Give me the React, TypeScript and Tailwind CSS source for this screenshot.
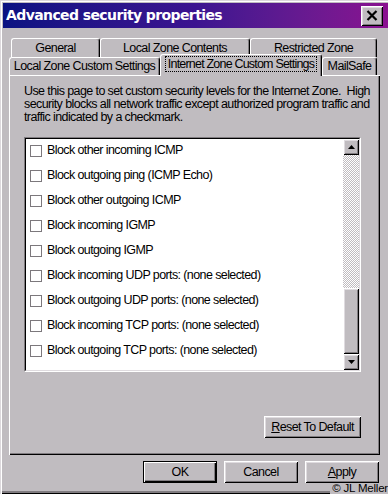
import React from "react";

const ITEMS = [
  "Block other incoming ICMP",
  "Block outgoing ping (ICMP Echo)",
  "Block other outgoing ICMP",
  "Block incoming IGMP",
  "Block outgoing IGMP",
  "Block incoming UDP ports: (none selected)",
  "Block outgoing UDP ports: (none selected)",
  "Block incoming TCP ports: (none selected)",
  "Block outgoing TCP ports: (none selected)",
];

const raised =
  "bg-[#c0bcc0] shadow-[inset_1px_1px_0_#ffffff,inset_-1px_-1px_0_#000000,inset_2px_2px_0_#dfdbdf,inset_-2px_-2px_0_#807c80]";

const Tab = ({ label, w }: { label: string; w: string }) => (
  <div
    className={`${w} h-full flex items-center justify-center whitespace-nowrap rounded-t-[3px] border-t border-l border-t-white border-l-white border-r border-r-black shadow-[inset_-1px_0_0_#807c80] leading-none`}
  >
    {label}
  </div>
);

const Button = ({
  children,
  w = "w-[74px]",
  primary = false,
}: {
  children: React.ReactNode;
  w?: string;
  primary?: boolean;
}) => (
  <div
    className={`${w} h-[22px] flex items-center justify-center whitespace-nowrap ${
      primary
        ? "bg-[#c0bcc0] border border-black shadow-[inset_1px_1px_0_#ffffff,inset_-1px_-1px_0_#000000,inset_-2px_-2px_0_#807c80]"
        : raised
    }`}
  >
    {children}
  </div>
);

const Arrow = ({ down = false }: { down?: boolean }) => (
  <div className={`w-[16px] h-[16px] flex items-center justify-center ${raised}`}>
    <svg width="7" height="4" viewBox="0 0 7 4">
      <polygon points={down ? "0,0 7,0 3.5,4" : "3.5,0 7,4 0,4"} fill="#000" />
    </svg>
  </div>
);

export default function App() {
  return (
    <div className="relative w-[388px] h-[494px] overflow-hidden bg-[#c0bcc0] pl-[3px] pt-[3px] text-black text-[12.5px] tracking-[-0.6px] font-['Liberation_Sans',Arial,sans-serif] shadow-[inset_1px_1px_0_#dcd8dc,inset_2px_2px_0_#ffffff,inset_0_-1px_0_#000000,inset_0_-3px_0_#807c80]">
      {/* title bar */}
      <div className="h-[25px] flex items-center justify-between pl-[3px] pr-[5px] bg-linear-to-r from-[#0a1282] via-[#3c1490] to-[#8a1090]">
        <span className="text-white font-bold text-[14px] tracking-[-0.6px] font-['DejaVu_Sans',sans-serif]">
          Advanced security properties
        </span>
        <div className={`w-[22px] h-[20px] flex items-center justify-center ${raised}`}>
          <svg width="12" height="11" viewBox="0 0 12 11">
            <path d="M1.5 1 L10.5 10 M10.5 1 L1.5 10" stroke="#000" strokeWidth="2.2" />
          </svg>
        </div>
      </div>

      <div className="pl-[6px]">
        {/* tabs */}
        <div className="mt-[10px] ml-[2px] h-[19px] flex">
          <Tab label="General" w="w-[89px]" />
          <Tab label="Local Zone Contents" w="w-[150px]" />
          <Tab label="Restricted Zone" w="w-[127px]" />
        </div>
        <div className="-mt-[3px] h-[21px] flex items-end">
          <div className="h-[18px] w-[151px]">
            <Tab label="Local Zone Custom Settings" w="w-[151px]" />
          </div>
          <div className="relative z-10 -mb-px h-[22px] w-[162px] bg-[#c0bcc0] rounded-t-[3px] border-t border-l border-t-white border-l-white border-r border-r-black shadow-[inset_-1px_0_0_#807c80] flex justify-center pt-[1px]">
            <div className="h-[16px] w-[152px] border border-dotted border-black flex items-center justify-center leading-none whitespace-nowrap tracking-[-0.8px]">
              Internet Zone Custom Settings
            </div>
          </div>
          <div className="h-[18px] w-[55px]">
            <Tab label="MailSafe" w="w-[55px]" />
          </div>
        </div>

        {/* panel */}
        <div className="w-[371px] h-[380px] pl-[15px] pt-[10px] shadow-[inset_1px_1px_0_#ffffff,inset_-1px_-1px_0_#000000,inset_-2px_-2px_0_#807c80]">
          <p className="leading-[13px] whitespace-nowrap">
            Use this page to set custom security levels for the Internet Zone.&nbsp; High
            <br />
            security blocks all network traffic except authorized program traffic and
            <br />
            traffic indicated by a checkmark.
          </p>

          <div className="mt-[13px] w-[337px] h-[235px] border border-t-[#807c80] border-l-[#807c80] border-b-white border-r-white">
            <div className="w-full h-full border border-t-black border-l-black border-b-[#dfdbdf] border-r-[#dfdbdf] bg-white flex">
              <div className="flex-1 -mt-px">
                {ITEMS.map((item) => (
                  <div key={item} className="h-[25px] flex items-center whitespace-nowrap">
                    <div className="ml-[4px] w-[12px] h-[12px] border border-[#7c787c] bg-white" />
                    <span className="ml-[5px]">{item}</span>
                  </div>
                ))}
              </div>
              <div className="w-[16px] flex flex-col">
                <Arrow />
                <div className="h-[133px] bg-[repeating-conic-gradient(#c0bcc0_0%_25%,#ffffff_0%_50%)] bg-size-[2px_2px]" />
                <div className={`h-[66px] ${raised}`} />
                <Arrow down />
              </div>
            </div>
          </div>

          <div className="w-[337px] mt-[44px] flex justify-end">
            <Button w="w-[97px]">
              <span>
                <span className="underline">R</span>eset To Default
              </span>
            </Button>
          </div>
        </div>

        {/* dialog buttons */}
        <div className="w-[370px] mt-[6px] flex justify-end gap-[7px]">
          <Button primary>OK</Button>
          <Button>Cancel</Button>
          <Button>
            <span>
              <span className="underline">A</span>pply
            </span>
          </Button>
        </div>
      </div>

      <span className="absolute right-0 bottom-0 bg-[#c0bcc0] pl-[2px] text-[11.5px] leading-[11px] tracking-[-0.2px]">
        © JL Meller
      </span>
    </div>
  );
}
